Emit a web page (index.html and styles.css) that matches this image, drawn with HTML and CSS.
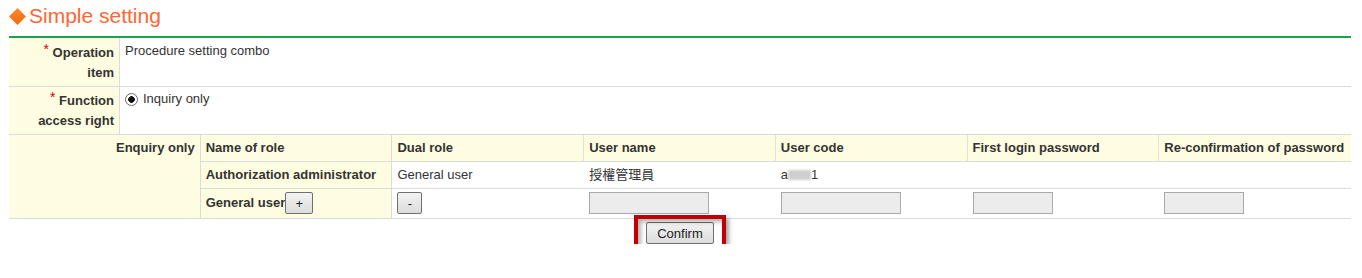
FILE: index.html
```html
<!DOCTYPE html>
<html lang="en">
<head>
    <meta charset="UTF-8">
    <title>Simple setting</title>
    <link rel="stylesheet" href="styles.css">
</head>
<body>
    <div class="page">
        <h2 class="title">
            <svg class="diamond" width="17" height="17" viewBox="0 0 17 17">
                <defs>
                    <linearGradient id="dg" x1="0" y1="0" x2="0" y2="1">
                        <stop offset="0" stop-color="#ff8a2a"/>
                        <stop offset="1" stop-color="#f06a10"/>
                    </linearGradient>
                </defs>
                <polygon points="8.5,0 17,8.5 8.5,17 0,8.5" fill="url(#dg)"/>
            </svg>
            Simple setting
        </h2>

        <div class="form">
            <div class="label first"><span class="req">*</span> Operation item</div>
            <div class="value first">Procedure setting combo</div>
            <div class="label"><span class="req">*</span> Function access right</div>
            <div class="value">
                <label class="radio"><input type="radio" name="access" checked> Inquiry only</label>
            </div>
        </div>

        <div class="roles">
            <div class="cell side">Enquiry only</div>

            <div class="cell name">Name of role</div>
            <div class="cell head">Dual role</div>
            <div class="cell head">User name</div>
            <div class="cell head">User code</div>
            <div class="cell head">First login password</div>
            <div class="cell head last">Re-confirmation of password</div>

            <div class="cell name">Authorization administrator</div>
            <div class="cell">General user</div>
            <div class="cell cjk">授權管理員</div>
            <div class="cell">a<span class="blur"></span>1</div>
            <div class="cell"></div>
            <div class="cell"></div>

            <div class="cell name tall">General user<button class="btn plus" type="button">+</button></div>
            <div class="cell tall"><button class="btn minus" type="button">-</button></div>
            <div class="cell tall"><input class="txt wide" type="text"></div>
            <div class="cell tall"><input class="txt wide" type="text"></div>
            <div class="cell tall"><input class="txt short" type="password"></div>
            <div class="cell tall"><input class="txt short" type="password"></div>
        </div>

        <div class="actions">
            <span class="highlight"><button class="btn confirm" type="button">Confirm</button></span>
        </div>
    </div>
</body>
</html>
```

FILE: styles.css
```css
body {
    margin: 0;
    font-family: "Liberation Sans", Arial, sans-serif;
    font-size: 13px;
    color: #333;
    background: #fff;
}
.page {
    width: 1342px;
    margin-left: 9px;
}
.title {
    display: flex;
    align-items: center;
    gap: 3px;
    margin: 0;
    padding: 2px 0 6px;
    line-height: 28px;
    font-size: 21px;
    font-weight: normal;
    color: #ff6633;
    border-bottom: 2px solid #1ba34a;
}
.diamond {
    display: block;
}
.form {
    display: grid;
    grid-template-columns: 111px 1fr;
    line-height: 20px;
}
.label {
    background: #fffde1;
    border-right: 1px solid #dcdcdc;
    border-bottom: 1px solid #dcdcdc;
    padding: 4px 5px 3px;
    text-align: right;
    font-weight: bold;
}
.label.first {
    padding-top: 5px;
}
.req {
    color: #e00000;
    font-weight: normal;
    font-size: 14px;
    line-height: 0;
    vertical-align: 3px;
}
.value {
    border-bottom: 1px solid #dcdcdc;
    padding: 2px 5px;
}
.value.first {
    padding-top: 3px;
}
.radio {
    display: inline-flex;
    align-items: center;
    gap: 5px;
}
.radio input {
    appearance: none;
    width: 13px;
    height: 13px;
    margin: 0;
    border: 1px solid #6a6a6a;
    border-radius: 50%;
    background: radial-gradient(circle, #111 0 3px, #fff 3.6px);
}
.roles {
    display: grid;
    grid-template-columns: repeat(7, 1fr);
    line-height: 20px;
}
.cell {
    display: flex;
    align-items: center;
    padding: 3px 5px;
    border-bottom: 1px solid #dcdcdc;
    min-width: 0;
    white-space: nowrap;
}
.side {
    grid-row: 1 / 4;
    align-items: flex-start;
    justify-content: flex-end;
    background: #fffde1;
    border-right: 1px solid #dcdcdc;
    font-weight: bold;
}
.name {
    background: #fffde1;
    border-right: 1px solid #dcdcdc;
    font-weight: bold;
}
.head {
    background: #fffde1;
    border-right: 1px solid #e2e2d8;
    font-weight: bold;
}
.head.last {
    border-right: none;
}
.tall {
    padding-bottom: 4px;
}
.cjk {
    font-family: "Liberation Sans", "Noto Sans CJK TC", sans-serif;
}
.blur {
    display: inline-block;
    width: 23px;
    height: 10px;
    background: #cfcfcf;
    filter: blur(1px);
}
.btn {
    height: 22px;
    padding: 0;
    border: 1px solid #707070;
    border-radius: 2px;
    background: linear-gradient(#f3f3f3, #dcdcdc);
    font-family: "Liberation Sans", Arial, sans-serif;
    font-size: 13px;
    color: #222;
}
.plus {
    width: 28px;
}
.minus {
    width: 25px;
}
.txt {
    box-sizing: border-box;
    height: 22px;
    margin: 0;
    border: 1px solid #a9a9a9;
    background: #ececec;
}
.wide {
    width: 120px;
}
.short {
    width: 80px;
}
.actions {
    display: flex;
    justify-content: center;
    padding-top: 3px;
}
.highlight {
    position: relative;
    display: inline-flex;
}
.highlight::after {
    content: "";
    position: absolute;
    top: -7px;
    left: -12px;
    right: -12px;
    bottom: -8px;
    border: 4px solid #c00000;
    box-shadow: 3px 3px 4px rgba(0, 0, 0, 0.35), inset 3px 3px 4px rgba(0, 0, 0, 0.3);
    pointer-events: none;
}
.confirm {
    width: 68px;
}
```
